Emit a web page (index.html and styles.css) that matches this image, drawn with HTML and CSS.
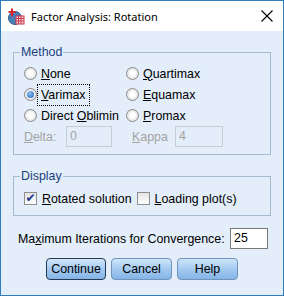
FILE: index.html
```html
<!DOCTYPE html>
<html lang="en">

<head>
    <meta charset="UTF-8">
    <title>Factor Analysis: Rotation</title>
    <link rel="stylesheet" href="styles.css">
</head>

<body>
    <div class="window">
        <div class="titlebar">
            <svg class="app-icon" width="17" height="17" viewBox="0 0 17 17">
                <circle cx="7" cy="10" r="6.5" fill="#4a7fb8" stroke="#2d5a8c" stroke-width="1"/>
                <rect x="8" y="8" width="8" height="8" fill="#f4d6dc" stroke="#c8364a" stroke-width="1"/>
                <path d="M8 10.5h8M8 13h8M10.5 8v8M13 8v8" stroke="#c8364a" stroke-width="1"/>
                <path d="M4 0.5v8M0.5 4h7" stroke="#d8262f" stroke-width="2"/>
            </svg>
            <span class="title">Factor Analysis: Rotation</span>
            <svg class="close" width="12" height="12" viewBox="0 0 12 12">
                <path d="M0.5 0.5l11 11M11.5 0.5l-11 11" stroke="#000" stroke-width="1.1"/>
            </svg>
        </div>

        <div class="content">
            <fieldset class="group method">
                <legend>Method</legend>
                <div class="radio-grid">
                    <label class="option"><span class="radio"></span><span><u>N</u>one</span></label>
                    <label class="option"><span class="radio"></span><span><u>Q</u>uartimax</span></label>
                    <label class="option"><span class="radio checked"></span><span class="focus"><u>V</u>arimax</span></label>
                    <label class="option"><span class="radio"></span><span><u>E</u>quamax</span></label>
                    <label class="option"><span class="radio"></span><span>Direct <u>O</u>blimin</span></label>
                    <label class="option"><span class="radio"></span><span><u>P</u>romax</span></label>
                </div>
                <div class="param-row">
                    <span class="param-label delta"><u>D</u>elta:</span>
                    <span class="field disabled small">0</span>
                    <span class="param-label kappa"><u>K</u>appa</span>
                    <span class="field disabled small kappa-field">4</span>
                </div>
            </fieldset>

            <fieldset class="group display">
                <legend>Display</legend>
                <div class="check-row">
                    <label class="option"><span class="checkbox checked">&#10004;</span><span><u>R</u>otated solution</span></label>
                    <label class="option loading"><span class="checkbox"></span><span><u>L</u>oading plot(s)</span></label>
                </div>
            </fieldset>

            <div class="iter-row">
                <span>Ma<u>x</u>imum Iterations for Convergence:</span>
                <span class="field iter">25</span>
            </div>

            <div class="buttons">
                <button class="btn default">Continue</button>
                <button class="btn">Cancel</button>
                <button class="btn">Help</button>
            </div>
        </div>
    </div>
</body>

</html>
```

FILE: styles.css
```css
body {
    margin: 0;
    background-color: #fff;
}

.window {
    width: 284px;
    height: 296px;
    box-sizing: border-box;
    border: 1px solid #2f7dbd;
    background-color: #e3eefa;
    font-family: "Liberation Sans", Arial, sans-serif;
    font-size: 12.4px;
    color: #000;
}

.titlebar {
    height: 30px;
    background-color: #fff;
    display: flex;
    align-items: center;
    padding-left: 7px;
}

.title {
    font-family: "Noto Sans", "Open Sans", sans-serif;
    font-size: 11px;
    margin-left: 6px;
    flex: 1;
}

.close {
    margin-right: 10px;
}

.content {
    padding: 0 12px;
}

.group {
    margin: 0;
    border: 1px solid #a4bbd2;
    padding: 0 0 0 10px;
}

.group legend {
    color: #223f7f;
    padding: 0 1px;
    margin-left: -4px;
    line-height: 14px;
}

.method {
    margin-top: 14px;
    padding-top: 4px;
    padding-bottom: 7px;
}

.radio-grid {
    display: grid;
    grid-template-columns: 102px 1fr;
}

.option {
    display: flex;
    align-items: center;
    height: 21px;
    gap: 4px;
}

.radio {
    width: 11px;
    height: 11px;
    border-radius: 50%;
    border: 1px solid #8a8a8a;
    background: radial-gradient(circle, #fff 30%, #cfcfcf 100%);
    box-shadow: inset 0 0 0 1px #e8e8e8;
    position: relative;
}

.radio.checked::after {
    content: "";
    position: absolute;
    left: 2px;
    top: 2px;
    width: 7px;
    height: 7px;
    border-radius: 50%;
    background: radial-gradient(circle at 40% 35%, #8cc2f4, #1b5fb8);
}

.focus {
    outline: 1px dotted #000;
    outline-offset: 3px;
}

.param-row {
    display: flex;
    align-items: center;
    height: 21px;
}

.param-label {
    color: #a3a3a3;
}

.delta {
    width: 42px;
}

.kappa {
    margin-left: 20px;
    width: 43px;
}

.field {
    box-sizing: border-box;
    height: 21px;
    border: 1px solid #a0a0a0;
    background-color: #fff;
    padding: 2px 3px;
    line-height: 15px;
}

.field.disabled {
    border-color: #c4ccd4;
    background-color: transparent;
    color: #a3a3a3;
}

.small {
    width: 46px;
}

.kappa-field {
    width: 48px;
}

.display {
    margin-top: 14px;
    padding-top: 5px;
    padding-bottom: 6px;
}

.check-row {
    display: flex;
}

.checkbox {
    box-sizing: border-box;
    width: 13px;
    height: 13px;
    border: 1px solid #8e8e8e;
    background: linear-gradient(#e4e4e4, #fff);
    color: #1e3590;
    font-size: 12px;
    line-height: 11px;
    text-align: center;
    font-family: "DejaVu Sans", sans-serif;
}

.check-row .option {
    gap: 5px;
}

.loading {
    margin-left: 5px;
}

.iter-row {
    display: flex;
    align-items: center;
    justify-content: space-between;
    margin-top: 12px;
    padding: 0 3px 0 5px;
}

.iter {
    width: 38px;
    border-color: #7a7a7a;
}

.buttons {
    display: flex;
    justify-content: center;
    gap: 5px;
    margin-top: 9px;
}

.btn {
    height: 22px;
    width: 61px;
    padding: 0;
    font-family: "Liberation Sans", Arial, sans-serif;
    font-size: 12.4px;
    color: #000;
    border: 1px solid #6f93ba;
    border-radius: 4px;
    background: linear-gradient(#d0e6fa, #a4caf0 50%, #84b4e6);
}

.btn.default {
    border-color: #233a57;
    width: 60px;
}
```
